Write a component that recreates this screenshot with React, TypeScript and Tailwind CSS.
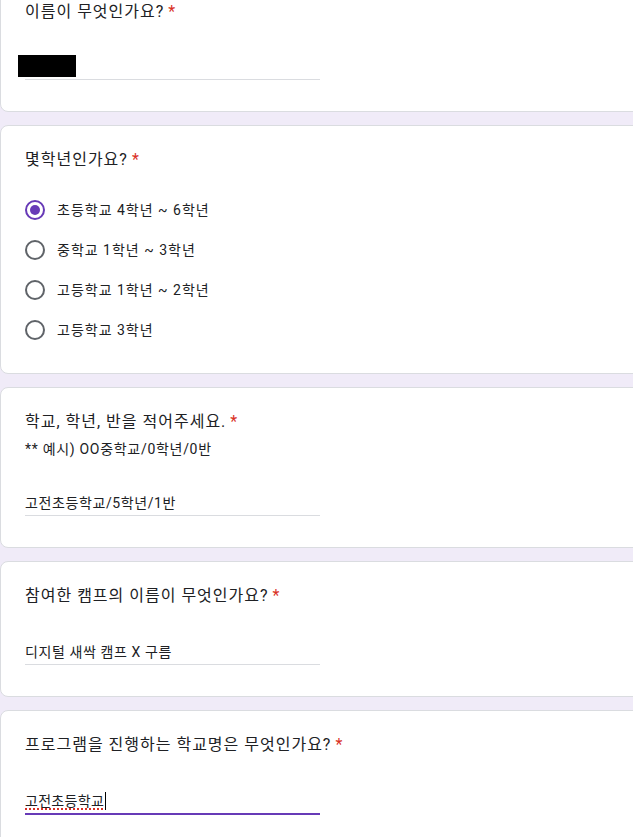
import React from 'react';

const font = { fontFamily: 'Roboto, "Noto Sans CJK KR", Arial, sans-serif' };

function Star() {
  return <span className="ml-1 text-[#d93025]">*</span>;
}

function Card({ children, className = '' }: { children: React.ReactNode; className?: string }) {
  return (
    <div className={`w-[700px] rounded-lg border border-[#dadce0] bg-white pl-6 ${className}`}>
      {children}
    </div>
  );
}

function Title({ text }: { text: string }) {
  return (
    <div className="text-[16px] leading-6 tracking-[1px] text-[#202124]">
      {text}
      <Star />
    </div>
  );
}

function Answer({ value }: { value: string }) {
  return (
    <div className="mt-8 w-[295px] border-b border-[#dadce0]">
      <div className="h-6 text-[14px] leading-6 tracking-[0.6px] text-[#202124]">{value}</div>
    </div>
  );
}

function Radio({ checked, label }: { checked?: boolean; label: string }) {
  return (
    <div className="flex h-10 items-center">
      <span
        className={`flex h-5 w-5 items-center justify-center rounded-full border-2 ${
          checked ? 'border-[#673ab7]' : 'border-[#5f6368]'
        }`}
      >
        {checked && <span className="h-[10px] w-[10px] rounded-full bg-[#673ab7]" />}
      </span>
      <span className="ml-3 text-[14px] tracking-[1px] text-[#202124]">{label}</span>
    </div>
  );
}

export default function App() {
  return (
    <div className="h-[837px] w-[633px] overflow-hidden bg-[#f0ebf8]" style={font}>
      <div className="-mt-[23px] flex flex-col gap-[13px]">
        {/* 이름 */}
        <Card className="pt-[22px] pb-[31px]">
          <Title text="이름이 무엇인가요?" />
          <div className="mt-8 w-[295px] border-b border-[#dadce0]">
            <div className="h-6">
              <span className="-ml-[7px] -mt-[1px] block h-[22px] w-[58px] bg-black" />
            </div>
          </div>
        </Card>

        {/* 학년 */}
        <Card className="pt-[22px] pb-[23px]">
          <Title text="몇학년인가요?" />
          <div className="mt-[18px] flex flex-col">
            <Radio checked label="초등학교 4학년 ~ 6학년" />
            <Radio label="중학교 1학년 ~ 3학년" />
            <Radio label="고등학교 1학년 ~ 2학년" />
            <Radio label="고등학교 3학년" />
          </div>
        </Card>

        {/* 학교 학년 반 */}
        <Card className="pt-[22px] pb-[31px]">
          <Title text="학교, 학년, 반을 적어주세요." />
          <div className="mt-[3px] text-[14px] leading-6 tracking-[0.7px] text-[#202124]">
            ** 예시) OO중학교/0학년/0반
          </div>
          <div className="mt-[30px] w-[295px] border-b border-[#dadce0]">
            <div className="h-6 text-[14px] leading-6 tracking-[0.6px] text-[#202124]">고전초등학교/5학년/1반</div>
          </div>
        </Card>

        {/* 캠프 */}
        <Card className="pt-[22px] pb-[31px]">
          <Title text="참여한 캠프의 이름이 무엇인가요?" />
          <Answer value="디지털 새싹 캠프 X 구름" />
        </Card>

        {/* 학교명 */}
        <Card className="pt-[22px] pb-[31px]">
          <Title text="프로그램을 진행하는 학교명은 무엇인가요?" />
          <div className="mt-8 w-[295px] border-b-2 border-[#673ab7]">
            <div className="flex h-6 items-center text-[14px] leading-6 tracking-[0.3px] text-[#202124]">
              <span className="underline decoration-[#d93025] decoration-dotted decoration-2 underline-offset-2">
                고전초등학교
              </span>
              <span className="ml-px h-[18px] w-px bg-black" />
            </div>
          </div>
        </Card>
      </div>
    </div>
  );
}
